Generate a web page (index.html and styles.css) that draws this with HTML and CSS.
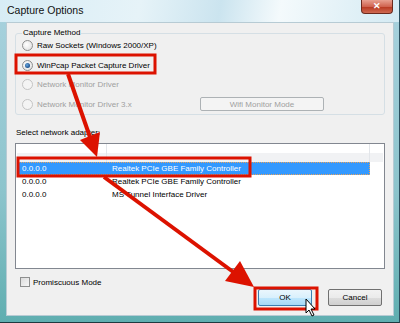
FILE: index.html
```html
<!DOCTYPE html>
<html lang="en">
<head>
  <meta charset="UTF-8" />
  <title>Capture Options</title>
  <link rel="stylesheet" href="styles.css">
</head>
<body>
  <div class="window">
    <div class="titlebar">
      <span class="title">Capture Options</span>
      <div class="close">&#x2715;</div>
    </div>

    <div class="client">
      <div class="group">
        <span class="group-label">Capture Method</span>
        <div class="radio-row"><span class="radio"></span>Raw Sockets (Windows 2000/XP)</div>
        <div class="radio-row"><span class="radio checked"></span>WinPcap Packet Capture Driver</div>
        <div class="radio-row disabled"><span class="radio"></span>Network Monitor Driver</div>
        <div class="radio-row disabled">
          <span class="radio"></span>Network Monitor Driver 3.x
          <button class="btn wifi" disabled>Wifi Monitor Mode</button>
        </div>
      </div>

      <div class="list-label">Select network adapter:</div>
      <div class="list">
        <div class="list-head">
          <div class="col-a"></div>
          <div class="col-b"></div>
          <div class="col-c"></div>
        </div>
        <div class="list-row selected"><span class="col-a">0.0.0.0</span><span class="col-b">Realtek PCIe GBE Family Controller</span></div>
        <div class="list-row"><span class="col-a">0.0.0.0</span><span class="col-b">Realtek PCIe GBE Family Controller</span></div>
        <div class="list-row"><span class="col-a">0.0.0.0</span><span class="col-b">MS Tunnel Interface Driver</span></div>
      </div>

      <div class="footer">
        <label class="check"><span class="box"></span>Promiscuous Mode</label>
        <div class="buttons">
          <button class="btn ok">OK</button>
          <button class="btn">Cancel</button>
        </div>
      </div>
    </div>

    <!-- annotations drawn over the dialog -->
    <svg class="marks" width="400" height="323" viewBox="0 0 400 323">
      <g fill="none" stroke="#dc1200" stroke-width="3">
        <rect x="16" y="55" width="139" height="18" />
        <rect x="18" y="158" width="232" height="18" />
        <rect x="255" y="288" width="62" height="21" />
      </g>
      <g stroke="#dc1200" stroke-width="4" stroke-linecap="butt">
        <line x1="68" y1="74" x2="91" y2="140" />
        <line x1="104" y1="177" x2="236" y2="274" />
      </g>
      <g fill="#dc1200">
        <polygon points="97,157 80,140 100,132" />
        <polygon points="254,287 225,281 240,261" />
      </g>
      <g>
        <path d="M306 299 L306 313 L309 310 L312 316 L314 315 L311 309 L315 309 Z" fill="#fff" stroke="#000" stroke-width="1" />
      </g>
    </svg>
  </div>
</body>
</html>
```

FILE: styles.css
```css
* {
  box-sizing: border-box;
}

html, body {
  margin: 0;
  width: 400px;
  height: 323px;
  overflow: hidden;
  font-family: 'Liberation Sans', Arial, sans-serif;
  font-size: 8px;
  color: #000;
}

.window {
  position: relative;
  width: 400px;
  height: 323px;
  display: flex;
  flex-direction: column;
  background: linear-gradient(180deg, #a9d2de 0%, #8cc4cc 60%, #5faeb0 100%);
  border-right: 1px solid #2b4e5e;
  border-bottom: 1px solid #1d3a40;
}

.titlebar {
  height: 22px;
  display: flex;
  align-items: flex-start;
  justify-content: space-between;
  padding-left: 7px;
  background: linear-gradient(100deg, #d7ecf5 0%, #e6f3f8 35%, #cbe4ef 55%, #f4fafc 70%, #d4eaf3 100%);
}

.title {
  font-size: 10.5px;
  margin-top: 4px;
  color: #111;
}

.close {
  width: 32px;
  height: 14px;
  margin-right: 6px;
  border: 1px solid #6b2a1e;
  border-top: none;
  border-radius: 0 0 4px 4px;
  background: linear-gradient(180deg, #e8a090 0%, #d06450 50%, #b93a22 55%, #cf6a52 100%);
  color: #fff;
  font-size: 9px;
  font-weight: bold;
  text-align: center;
  line-height: 13px;
}

.client {
  flex: 1;
  margin: 0 5px 6px 6px;
  background: #f0f0f0;
  border: 1px solid #b7cbd4;
  padding: 10px 8px 0 8px;
  display: flex;
  flex-direction: column;
}

.group {
  position: relative;
  border: 1px solid #d5dfe5;
  border-radius: 3px;
  padding: 2px 0 4px 6px;
  height: 82px;
}

.group-label {
  position: absolute;
  top: -6px;
  left: 6px;
  padding: 0 1px;
  background: #f0f0f0;
}

.radio-row {
  display: flex;
  align-items: center;
  height: 19.5px;
  gap: 4px;
}

.radio-row.disabled {
  color: #a0a0a0;
}

.radio {
  width: 11px;
  height: 11px;
  border-radius: 50%;
  border: 1px solid #8e8f8f;
  background: radial-gradient(circle at 40% 40%, #ffffff 0%, #e6e6e6 70%, #d4d4d4 100%);
  position: relative;
}

.radio-row.disabled .radio {
  border-color: #c4c4c4;
  background: #f4f4f4;
}

.radio.checked::after {
  content: "";
  position: absolute;
  left: 2px;
  top: 2px;
  width: 5px;
  height: 5px;
  border-radius: 50%;
  background: radial-gradient(circle at 40% 40%, #6aa9e0 0%, #1b4f8c 70%, #0f2f5a 100%);
}

.btn {
  font-family: inherit;
  font-size: 8px;
  height: 17px;
  padding: 0;
  border: 1px solid #707070;
  border-radius: 2px;
  background: linear-gradient(180deg, #f2f2f2 0%, #ebebeb 50%, #dddddd 51%, #cfcfcf 100%);
  color: #000;
}

.btn.wifi {
  margin-left: auto;
  margin-right: 60px;
  width: 124px;
  height: 14px;
  border-color: #adb2b5;
  background: #f4f4f4;
  color: #a0a0a0;
}

.list-label {
  margin-top: 13px;
  margin-left: 1px;
}

.list {
  margin-top: 6px;
  height: 126px;
  border: 1px solid #828790;
  background: #fff;
  padding: 0 1px;
}

.list-head {
  display: flex;
  height: 18px;
  background: linear-gradient(180deg, #ffffff 0%, #ffffff 50%, #f1f2f4 51%, #f1f2f4 100%);
}

.list-head div {
  border-right: 1px solid #e3e6ea;
}

.col-a {
  width: 90px;
  padding-left: 5px;
}

.col-b {
  width: 263px;
  padding-left: 5px;
}

.list-head .col-c {
  flex: 1;
  border-right: none;
}

.list-row {
  display: flex;
  align-items: center;
  height: 13px;
  width: 353px;
}

.list-row.selected {
  background: #3399ff;
  color: #fff;
  outline: 1px dotted #e8a35c;
  outline-offset: -1px;
}

.footer {
  display: flex;
  flex-direction: column;
  padding: 0 3px 0 0;
}

.check {
  display: flex;
  align-items: center;
  gap: 3px;
  margin-top: 8px;
  margin-left: 5px;
}

.box {
  width: 10px;
  height: 10px;
  border: 1px solid #8e8f8f;
  background: linear-gradient(135deg, #dcdcdc 0%, #f6f6f6 100%);
}

.buttons {
  display: flex;
  justify-content: flex-end;
  gap: 16px;
  margin-top: 2px;
}

.buttons .btn {
  width: 54px;
}

.btn.ok {
  border-color: #3c7fb1;
  background: linear-gradient(180deg, #eaf6fd 0%, #d9f0fc 50%, #bee6fd 51%, #a7d9f5 100%);
}

.marks {
  position: absolute;
  left: 0;
  top: 0;
  pointer-events: none;
}
```
